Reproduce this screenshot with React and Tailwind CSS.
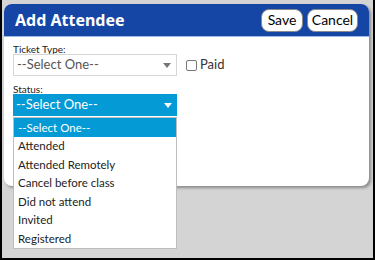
import { useState } from 'react'

const statuses = [
  '--Select One--',
  'Attended',
  'Attended Remotely',
  'Cancel before class',
  'Did not attend',
  'Invited',
  'Registered',
]

function Caret({ className }) {
  return (
    <svg width="8" height="5" viewBox="0 0 8 5" className={className}>
      <path d="M0 0 L8 0 L4 5 Z" fill="currentColor" />
    </svg>
  )
}

export default function App() {
  const [paid, setPaid] = useState(false)

  return (
    <div
      className="w-[375px] h-[260px] bg-[#d4d4d4] border-x-2 border-b-2 border-black pt-[4px] pl-[2px] overflow-hidden"
      style={{ fontFamily: 'Lato, "Noto Sans", sans-serif' }}
    >
      <div className="w-[365px] h-[182px] bg-white rounded-[8px] shadow-[2px_2px_3px_rgba(0,0,0,0.35)]">
        {/* header */}
        <div className="h-[33px] bg-[#1546a6] rounded-t-[8px] border-b border-[#9db9e6] flex items-center justify-between pl-[11px] pr-[11px]">
          <h1 className="text-white font-bold text-[16px] leading-none" style={{ fontFamily: '"Noto Sans", sans-serif' }}>
            Add Attendee
          </h1>
          <div className="flex gap-[4px]">
            <button className="w-[42px] h-[23px] bg-white border border-[#8a8a8a] rounded-[8px] text-[14px] leading-none text-black">
              Save
            </button>
            <button className="w-[51px] h-[23px] bg-white border border-[#8a8a8a] rounded-[8px] text-[14px] leading-none text-black">
              Cancel
            </button>
          </div>
        </div>

        {/* body */}
        <div className="pl-[9px] pt-[6px]">
          <div className="text-[10px] leading-[12px] text-[#222]">Ticket Type:</div>
          <div className="flex items-center gap-[9px] mt-[-1px]">
            <div className="w-[164px] h-[22px] border border-[#d6d6d6] bg-white flex items-center justify-between pl-[3px] pr-[5px]">
              <span className="text-[13px] text-[#555]">--Select One--</span>
              <Caret className="text-[#777]" />
            </div>
            <label className="flex items-center gap-[3px] text-[13px] text-[#333]">
              <input
                type="checkbox"
                checked={paid}
                onChange={() => setPaid(!paid)}
                className="appearance-none w-[11px] h-[11px] border border-[#777] rounded-[2px] bg-white"
              />
              Paid
            </label>
          </div>

          <div className="text-[10px] leading-[12px] text-[#222] mt-[7px]">Status:</div>
          <div className="relative w-[164px] mt-[-1px]">
            <div className="h-[22px] bg-[#049ad6] flex items-center justify-between pl-[3px] pr-[5px]">
              <span className="text-[13px] text-white">--Select One--</span>
              <Caret className="text-white" />
            </div>
            <ul className="absolute top-[23px] left-0 w-[164px] bg-white border border-[#bdbdbd] z-10">
              {statuses.map((s, i) => (
                <li
                  key={s}
                  className={
                    i === 0
                      ? 'h-[18.5px] flex items-center px-[4px] text-[11.5px] bg-[#049ad6] text-white'
                      : 'h-[18.5px] flex items-center px-[4px] text-[11.5px] text-[#222]'
                  }
                >
                  {s}
                </li>
              ))}
            </ul>
          </div>
        </div>
      </div>
    </div>
  )
}
